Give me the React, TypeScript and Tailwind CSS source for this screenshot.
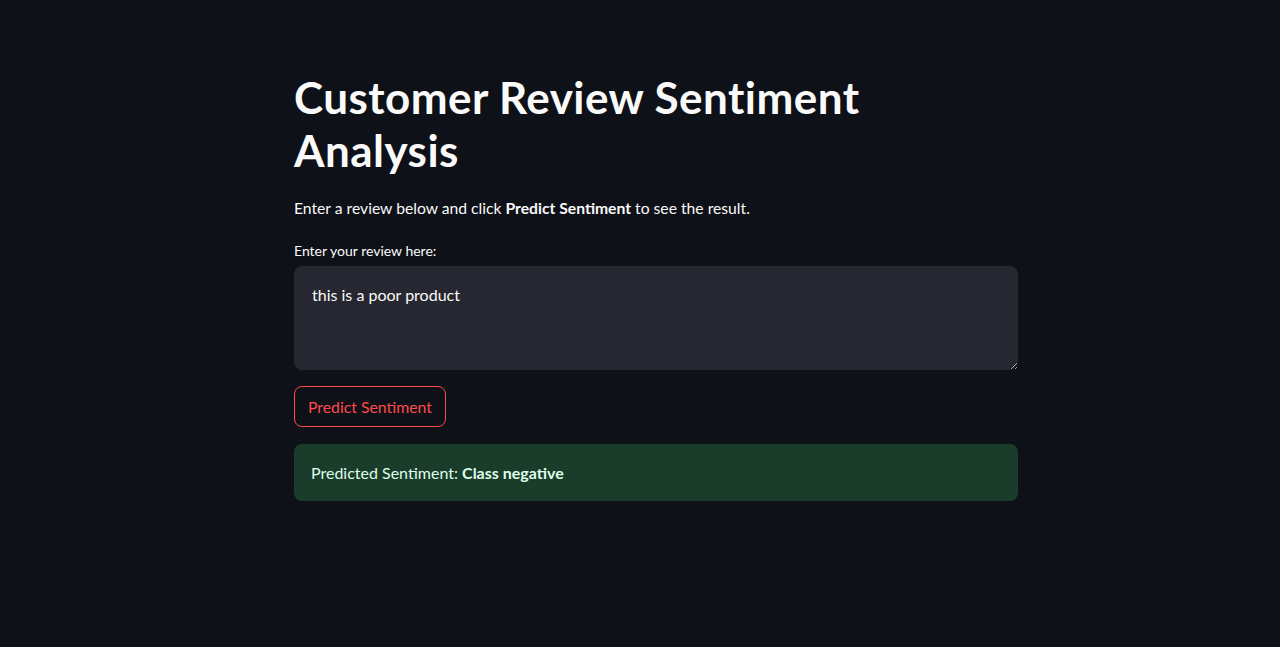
import React, { useState } from 'react';

const font = { fontFamily: 'Lato, "Noto Sans", sans-serif' };

export default function App() {
    const [review, setReview] = useState('this is a poor product');

    return (
        <div className="min-h-[647px] w-full bg-[#0e1117] text-[#fafafa]" style={font}>
            <main className="w-[724px] ml-[294px] pt-[71px] flex flex-col">
                <h1 className="text-[44px] leading-[53px] font-bold tracking-[0.45px] pr-[130px]">
                    Customer Review Sentiment Analysis
                </h1>

                <p className="mt-[19px] text-[15.7px] leading-[24px]">
                    Enter a review below and click <b>Predict Sentiment</b> to see the result.
                </p>

                <label className="mt-[22px] text-[14px] leading-[18px]">Enter your review here:</label>
                <textarea
                    className="mt-[6px] h-[104px] w-full rounded-lg bg-[#262730] px-[18px] py-[18px] text-[16px] leading-[22px] text-[#fafafa] outline-none"
                    value={review}
                    onChange={(e) => setReview(e.target.value)}
                />

                <div className="mt-[16px]">
                    <button className="h-[41px] px-[13px] rounded-lg border border-[#ff4b4b] text-[#ff4b4b] text-[15.8px]">
                        Predict Sentiment
                    </button>
                </div>

                <div className="mt-[17px] h-[57px] rounded-lg bg-[#1a3c2b] px-[17px] flex items-center text-[16px] text-[#dffde9]">
                    Predicted Sentiment:&nbsp;<b>Class negative</b>
                </div>
            </main>
        </div>
    );
}
